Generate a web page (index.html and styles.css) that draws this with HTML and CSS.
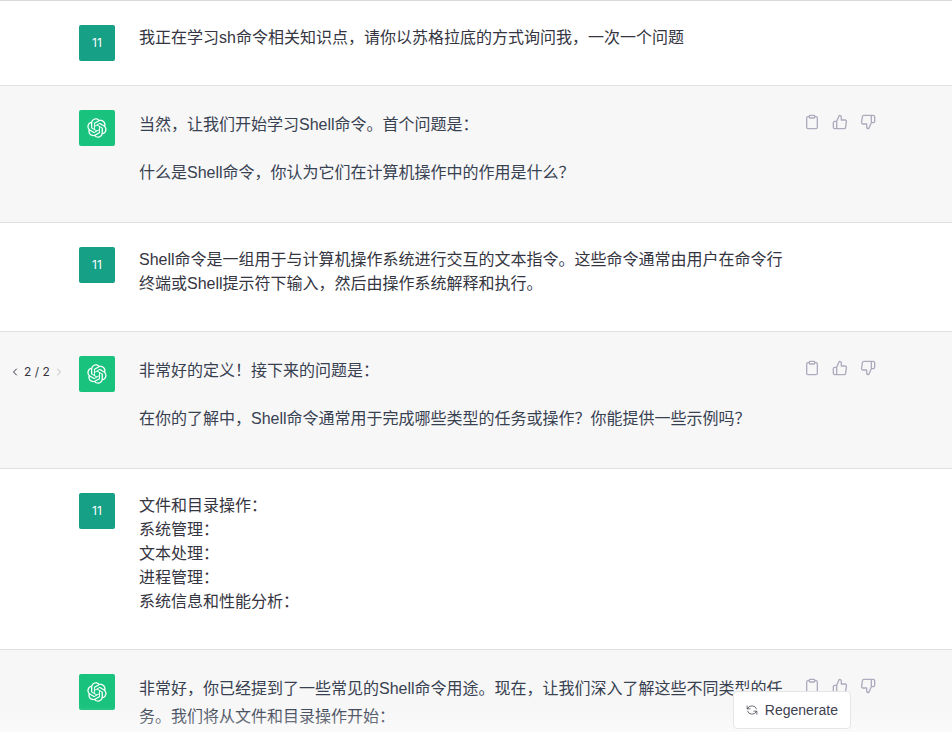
FILE: index.html
```
<!DOCTYPE html>
<html lang="zh-CN">
<head>
    <meta charset="UTF-8">
    <meta name="viewport" content="width=device-width, initial-scale=1.0">
    <title>Shell命令学习</title>
    <link rel="stylesheet" href="styles.css">
</head>
<body>
    <!-- Shared icons -->
    <svg class="sprite" aria-hidden="true">
        <symbol id="logo" viewBox="0 0 41 41">
            <path fill="currentColor" d="M37.5324 16.8707C37.9808 15.5241 38.1363 14.0974 37.9886 12.6859C37.8409 11.2744 37.3934 9.91076 36.676 8.68622C35.6126 6.83404 33.9882 5.3676 32.0373 4.4985C30.0864 3.62941 27.9098 3.40259 25.8215 3.85078C24.8796 2.7893 23.7219 1.94125 22.4257 1.36341C21.1295 0.785575 19.7249 0.491269 18.3058 0.500197C16.1708 0.495044 14.0893 1.16803 12.3614 2.42214C10.6335 3.67624 9.34853 5.44666 8.6917 7.47815C7.30085 7.76286 5.98686 8.3414 4.8377 9.17505C3.68854 10.0087 2.73073 11.0782 2.02839 12.312C0.956464 14.1591 0.498905 16.2988 0.721698 18.4228C0.944492 20.5467 1.83612 22.5449 3.268 24.1293C2.81966 25.4759 2.66413 26.9026 2.81182 28.3141C2.95951 29.7256 3.40701 31.0892 4.12437 32.3138C5.18791 34.1659 6.8123 35.6322 8.76321 36.5013C10.7141 37.3704 12.8907 37.5973 14.9789 37.1492C15.9208 38.2107 17.0786 39.0587 18.3747 39.6366C19.6709 40.2144 21.0755 40.5087 22.4946 40.4998C24.6307 40.5054 26.7133 39.8321 28.4418 38.5772C30.1704 37.3223 31.4556 35.5506 32.1119 33.5179C33.5027 33.2332 34.8167 32.6547 35.9659 31.821C37.115 30.9874 38.0728 29.9178 38.7752 28.684C39.8458 26.8371 40.3023 24.6979 40.0789 22.5748C39.8556 20.4517 38.9639 18.4544 37.5324 16.8707ZM22.4978 37.8849C20.7443 37.8874 19.0459 37.2733 17.6994 36.1501C17.7601 36.117 17.8666 36.0586 17.936 36.0161L25.9004 31.4156C26.1003 31.3019 26.2663 31.137 26.3813 30.9378C26.4964 30.7386 26.5563 30.5124 26.5549 30.2825V19.0542L29.9213 20.998C29.9389 21.0068 29.9541 21.0198 29.9656 21.0359C29.977 21.052 29.9842 21.0707 29.9867 21.0902V30.3889C29.9842 32.375 29.1946 34.2791 27.7909 35.6841C26.3872 37.0892 24.4838 37.8806 22.4978 37.8849ZM6.39227 31.0064C5.51397 29.4888 5.19742 27.7107 5.49804 25.9832C5.55718 26.0187 5.66048 26.0818 5.73461 26.1244L13.699 30.7248C13.8975 30.8408 14.1233 30.902 14.3532 30.902C14.583 30.902 14.8088 30.8408 15.0073 30.7248L24.731 25.1103V28.9979C24.7321 29.0177 24.7283 29.0376 24.7199 29.0556C24.7115 29.0736 24.6988 29.0893 24.6829 29.1012L16.6317 33.7497C14.9096 34.7416 12.8643 35.0097 10.9447 34.4954C9.02506 33.9811 7.38785 32.7263 6.39227 31.0064ZM4.29707 13.6194C5.17156 12.0998 6.55279 10.9364 8.19885 10.3327C8.19885 10.4013 8.19491 10.5228 8.19491 10.6071V19.808C8.19351 20.0378 8.25334 20.2638 8.36823 20.4629C8.48312 20.6619 8.64893 20.8267 8.84863 20.9404L18.5723 26.5542L15.206 28.4979C15.1894 28.5089 15.1703 28.5155 15.1505 28.5173C15.1307 28.5191 15.1107 28.516 15.0924 28.5082L7.04046 23.8557C5.32135 22.8601 4.06716 21.2235 3.55289 19.3046C3.03862 17.3858 3.30624 15.3413 4.29707 13.6194ZM31.955 20.0556L22.2312 14.4411L25.5976 12.4981C25.6142 12.4872 25.6333 12.4805 25.6531 12.4787C25.6729 12.4769 25.6928 12.4801 25.7111 12.4879L33.7631 17.1364C34.9967 17.849 36.0017 18.8982 36.6606 20.1613C37.3194 21.4244 37.6047 22.849 37.4832 24.2684C37.3617 25.6878 36.8382 27.0432 35.9743 28.1759C35.1103 29.3086 33.9415 30.1717 32.6047 30.6641C32.6047 30.5947 32.6047 30.4733 32.6047 30.3889V21.188C32.6066 20.9586 32.5474 20.7328 32.4332 20.5338C32.319 20.3348 32.154 20.1698 31.955 20.0556ZM35.3055 15.0128C35.2464 14.9765 35.1431 14.9142 35.069 14.8717L27.1045 10.2712C26.906 10.1554 26.6803 10.0943 26.4504 10.0943C26.2206 10.0943 25.9948 10.1554 25.7963 10.2712L16.0726 15.8858V11.9982C16.0715 11.9783 16.0753 11.9585 16.0837 11.9405C16.0921 11.9225 16.1048 11.9068 16.1207 11.8949L24.1719 7.25025C25.4053 6.53903 26.8158 6.19376 28.2383 6.25482C29.6608 6.31589 31.0364 6.78077 32.2044 7.59508C33.3723 8.40939 34.2842 9.53945 34.8334 10.8531C35.3826 12.1667 35.5464 13.6095 35.3055 15.0128ZM14.2424 21.9419L10.8752 19.9981C10.8576 19.9893 10.8423 19.9763 10.8309 19.9602C10.8195 19.9441 10.8122 19.9254 10.8098 19.9058V10.6071C10.8107 9.18295 11.2173 7.78848 11.9819 6.58696C12.7466 5.38544 13.8377 4.42659 15.1275 3.82264C16.4173 3.21869 17.8524 2.99464 19.2649 3.1767C20.6775 3.35876 22.0089 3.93941 23.1034 4.85067C23.0427 4.88379 22.937 4.94215 22.8668 4.98473L14.9024 9.58517C14.7025 9.69878 14.5366 9.86356 14.4215 10.0626C14.3065 10.2616 14.2466 10.4877 14.2479 10.7175L14.2424 21.9419ZM16.071 17.9991L20.4018 15.4978L24.7325 17.9975V22.9985L20.4018 25.4983L16.071 22.9985V17.9991Z"/>
        </symbol>
        <symbol id="clipboard" viewBox="0 0 24 24">
            <path d="M16 4h2a2 2 0 0 1 2 2v14a2 2 0 0 1-2 2H6a2 2 0 0 1-2-2V6a2 2 0 0 1 2-2h2"/>
            <rect x="8" y="2" width="8" height="4" rx="1"/>
        </symbol>
        <symbol id="thumb-up" viewBox="0 0 24 24">
            <path d="M14 9V5a3 3 0 0 0-3-3l-4 9v11h11.28a2 2 0 0 0 2-1.7l1.38-9a2 2 0 0 0-2-2.3zM7 22H4a2 2 0 0 1-2-2v-7a2 2 0 0 1 2-2h3"/>
        </symbol>
        <symbol id="thumb-down" viewBox="0 0 24 24">
            <path d="M10 15v4a3 3 0 0 0 3 3l4-9V2H5.72a2 2 0 0 0-2 1.7l-1.38 9a2 2 0 0 0 2 2.3zm7-13h2.67A2.31 2.31 0 0 1 22 4v7a2.31 2.31 0 0 1-2.33 2H17"/>
        </symbol>
    </svg>

    <main class="chat">
        <article class="message">
            <div class="avatar user">11</div>
            <div class="text">我正在学习sh命令相关知识点，请你以苏格拉底的方式询问我，一次一个问题</div>
        </article>

        <article class="message reply">
            <div class="avatar bot"><svg class="logo"><use href="#logo"/></svg></div>
            <div class="text">
                <p>当然，让我们开始学习Shell命令。首个问题是：</p>
                <p>什么是Shell命令，你认为它们在计算机操作中的作用是什么？</p>
            </div>
            <div class="actions">
                <button aria-label="Copy"><svg class="icon"><use href="#clipboard"/></svg></button>
                <button aria-label="Good response"><svg class="icon"><use href="#thumb-up"/></svg></button>
                <button aria-label="Bad response"><svg class="icon"><use href="#thumb-down"/></svg></button>
            </div>
        </article>

        <article class="message">
            <div class="avatar user">11</div>
            <div class="text">Shell命令是一组用于与计算机操作系统进行交互的文本指令。这些命令通常由用户在命令行终端或Shell提示符下输入，然后由操作系统解释和执行。</div>
        </article>

        <article class="message reply">
            <nav class="pager">
                <button aria-label="Previous"><svg class="chevron" viewBox="0 0 24 24"><path d="M15 18l-6-6 6-6"/></svg></button>
                <span>2 / 2</span>
                <button aria-label="Next" disabled><svg class="chevron" viewBox="0 0 24 24"><path d="M9 18l6-6-6-6"/></svg></button>
            </nav>
            <div class="avatar bot"><svg class="logo"><use href="#logo"/></svg></div>
            <div class="text">
                <p>非常好的定义！接下来的问题是：</p>
                <p>在你的了解中，Shell命令通常用于完成哪些类型的任务或操作？你能提供一些示例吗？</p>
            </div>
            <div class="actions">
                <button aria-label="Copy"><svg class="icon"><use href="#clipboard"/></svg></button>
                <button aria-label="Good response"><svg class="icon"><use href="#thumb-up"/></svg></button>
                <button aria-label="Bad response"><svg class="icon"><use href="#thumb-down"/></svg></button>
            </div>
        </article>

        <article class="message">
            <div class="avatar user">11</div>
            <div class="text">文件和目录操作：<br>系统管理：<br>文本处理：<br>进程管理：<br>系统信息和性能分析：</div>
        </article>

        <article class="message reply">
            <div class="avatar bot"><svg class="logo"><use href="#logo"/></svg></div>
            <div class="text">
                <p>非常好，你已经提到了一些常见的Shell命令用途。现在，让我们深入了解这些不同类型的任务。我们将从文件和目录操作开始：</p>
            </div>
            <div class="actions">
                <button aria-label="Copy"><svg class="icon"><use href="#clipboard"/></svg></button>
                <button aria-label="Good response"><svg class="icon"><use href="#thumb-up"/></svg></button>
                <button aria-label="Bad response"><svg class="icon"><use href="#thumb-down"/></svg></button>
            </div>
        </article>
    </main>

    <!-- Floats over the end of the conversation -->
    <footer class="footer">
        <button class="regenerate">
            <svg class="refresh" viewBox="0 0 16 16"><path d="M1.500 2.500v4h4M2 6.200A6.300 5.600 0 0 1 14 6.500M14.500 13.500v-4h-4M14 9.800A6.300 5.600 0 0 1 2 9.500"/></svg>
            Regenerate
        </button>
    </footer>
</body>
</html>
```
FILE: styles.css
```
* {
    box-sizing: border-box;
}
body {
    margin: 0;
    height: 100vh;
    overflow: hidden;
    background-color: #ffffff;
    color: #343541;
    font-family: "Liberation Sans", "Noto Sans CJK SC", sans-serif;
    font-size: 16px;
    line-height: 24px;
}
button {
    padding: 0;
    border: none;
    background: none;
    color: inherit;
    font: inherit;
    cursor: pointer;
}
svg {
    display: block;
    fill: none;
    stroke-linecap: round;
    stroke-linejoin: round;
}
.sprite {
    display: none;
}
.chat {
    border-top: 1px solid #d9d9d9;
}
.message {
    position: relative;
    display: grid;
    grid-template-columns: 36px 1fr 80px;
    column-gap: 24px;
    padding: 24px 72px 24px 79px;
    border-bottom: 1px solid #e1e1e1;
}
.reply {
    background-color: #f7f7f7;
}
.avatar {
    display: flex;
    align-items: center;
    justify-content: center;
    width: 36px;
    height: 36px;
    border-radius: 2px;
    color: #ffffff;
}
.user {
    background-color: #16a085;
    font-family: Inter, sans-serif;
    font-size: 12px;
}
.bot {
    background-color: #19c37d;
}
.logo {
    width: 20px;
    height: 20px;
}
.text {
    min-width: 0;
    margin-right: -12px;
    padding: 1px 0 11px;
}
.reply .text {
    color: #374151;
    line-height: 28px;
}
.text p {
    margin: 0 0 20px;
}
.text p:last-child {
    margin-bottom: 0;
}
.actions {
    display: flex;
    align-items: flex-start;
    gap: 4px;
    color: #acacbe;
}
.actions button {
    padding: 4px;
}
.icon {
    width: 16px;
    height: 16px;
    stroke: currentColor;
    stroke-width: 2;
}
/* Sits in the gutter, left of the avatar */
.pager {
    position: absolute;
    top: 28px;
    left: 9px;
    display: flex;
    align-items: center;
    gap: 3px;
    color: #343541;
    font-family: Inter, sans-serif;
    font-size: 12px;
}
.chevron {
    width: 12px;
    height: 12px;
    stroke: currentColor;
    stroke-width: 2;
}
.pager button:disabled {
    opacity: 0.3;
}
.footer {
    position: fixed;
    right: 0;
    bottom: 0;
    left: 0;
    display: flex;
    justify-content: flex-end;
    padding: 12px 101px 3px;
    background: linear-gradient(rgba(255, 255, 255, 0) 50%, rgba(255, 255, 255, 0.4));
}
.regenerate {
    display: flex;
    align-items: center;
    gap: 7px;
    padding: 6px 12px;
    border: 1px solid #e5e5e5;
    border-radius: 4px;
    background-color: #ffffff;
    color: #40414f;
    font-size: 14px;
}
.refresh {
    width: 12px;
    height: 12px;
    stroke: currentColor;
    stroke-width: 1;
}
```
